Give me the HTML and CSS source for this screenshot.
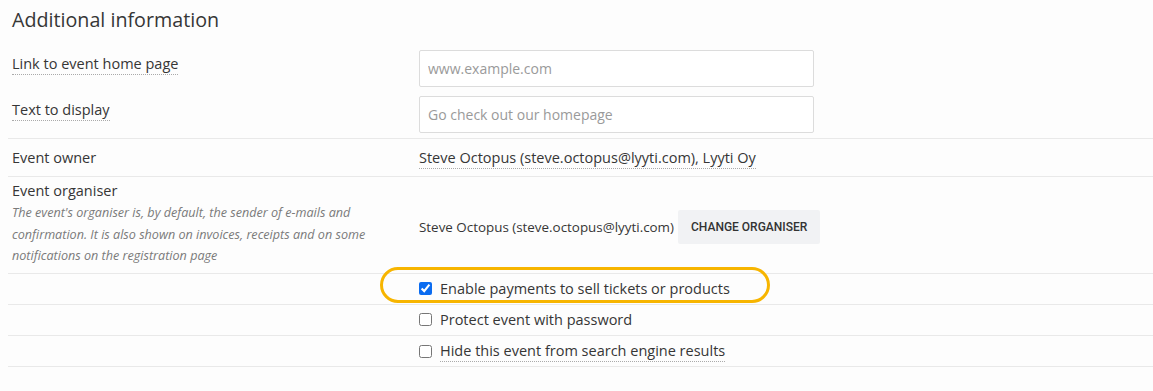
FILE: index.html
```html
<!DOCTYPE html>
<html lang="en">
<head>
<meta charset="utf-8">
<title>Additional information</title>
<link rel="stylesheet" href="styles.css">
</head>
<body>
<div class="page">
  <h2 class="title">Additional information</h2>
  <div class="row row-plain">
    <div class="label"><span class="tip">Link to event home page</span></div>
    <div class="value"><input class="field" type="text" placeholder="www.example.com"></div>
  </div>
  <div class="row row-plain row-second">
    <div class="label"><span class="tip">Text to display</span></div>
    <div class="value"><input class="field" type="text" placeholder="Go check out our homepage"></div>
  </div>
  <div class="row row-line row-owner">
    <div class="label">Event owner</div>
    <div class="value"><span class="tip">Steve Octopus (steve.octopus@lyyti.com), Lyyti Oy</span></div>
  </div>
  <div class="row row-line row-organiser">
    <div class="label">
      <div>Event organiser</div>
      <p class="help">The event's organiser is, by default, the sender of e-mails and confirmation. It is also shown on invoices, receipts and on some notifications on the registration page</p>
    </div>
    <div class="value value-organiser">
      <span class="small">Steve Octopus (steve.octopus@lyyti.com)</span>
      <button class="btn" type="button">Change organiser</button>
    </div>
  </div>
  <div class="row row-line row-check">
    <div class="label"></div>
    <div class="value">
      <label class="check"><input type="checkbox" checked><span>Enable payments to sell tickets or products</span><span class="highlight"></span></label>
    </div>
  </div>
  <div class="row row-line row-check">
    <div class="label"></div>
    <div class="value">
      <label class="check"><input type="checkbox"><span>Protect event with password</span></label>
    </div>
  </div>
  <div class="row row-line row-check row-last">
    <div class="label"></div>
    <div class="value">
      <label class="check"><input type="checkbox"><span class="tip">Hide this event from search engine results</span></label>
    </div>
  </div>
</div>
</body>
</html>
```

FILE: styles.css
```css
html, body {
  margin: 0;
  padding: 0;
  background: #fdfdfd;
}
body {
  padding: 0 0 0 8px;
  font-family: "Open Sans", "Noto Sans", sans-serif;
  font-size: 14.5px;
  color: #363636;
}
.page {
  padding-top: 6px;
}
.title {
  margin: 0 0 16px 4px;
  font-size: 19.7px;
  font-weight: 400;
  line-height: 28px;
  color: #363636;
}
.row {
  display: grid;
  grid-template-columns: 411px 1fr;
}
.row-line {
  border-top: 1px solid #e9e9e9;
}
.row-last {
  border-bottom: 1px solid #e9e9e9;
  height: 31px;
}
.label {
  padding-left: 4px;
  line-height: 20px;
}
.row-plain {
  padding-bottom: 9px;
}
.row-plain .label {
  padding-top: 4px;
}
.row-second {
  padding-bottom: 5px;
}
.tip {
  border-bottom: 1px dotted #aaa;
  padding-bottom: 1px;
}
.field {
  display: block;
  box-sizing: border-box;
  width: 395px;
  height: 37px;
  margin: 0;
  padding: 0 8px;
  border: 1px solid #dcdcdc;
  border-radius: 2px;
  background: #fff;
  font-family: inherit;
  font-size: 14px;
  color: #333;
}
.field::placeholder {
  color: #9a9a9a;
}
.row-owner {
  height: 37px;
  align-items: center;
}
.row-organiser {
  height: 97px;
  padding-top: 4px;
  box-sizing: border-box;
}
.help {
  margin: 1px 0 0 0;
  max-width: 362px;
  font-size: 12.6px;
  font-style: italic;
  line-height: 21.5px;
  color: #7a7a7a;
}
.value-organiser {
  display: flex;
  align-items: center;
  gap: 4px;
  margin-top: -1px;
}
.small {
  font-size: 13.4px;
}
.btn {
  height: 34px;
  padding: 0 13px;
  border: 0;
  border-radius: 2px;
  background: #f1f2f4;
  font-family: "Roboto", "Open Sans", sans-serif;
  font-size: 12px;
  font-weight: 500;
  text-transform: uppercase;
  color: #333;
}
.row-check {
  height: 30px;
  align-items: center;
}
.check {
  position: relative;
  display: inline-flex;
  align-items: center;
  gap: 8px;
}
.check input {
  margin: 0;
  width: 13px;
  height: 13px;
  accent-color: #0b6cf0;
}
.highlight {
  position: absolute;
  left: -39px;
  top: -12px;
  width: 390px;
  height: 36px;
  box-sizing: border-box;
  border: 3px solid #f7b500;
  border-radius: 18px;
  pointer-events: none;
}
```
